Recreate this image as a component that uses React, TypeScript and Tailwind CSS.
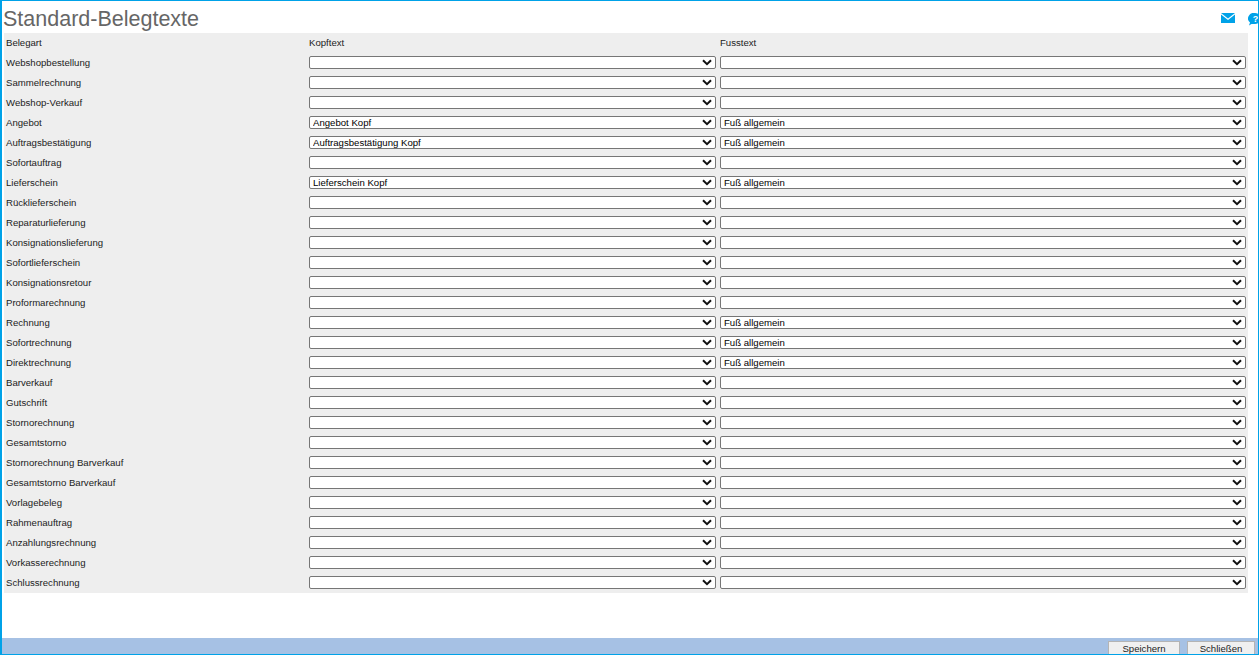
const rows: [string, string, string][] = [
  ["Webshopbestellung", "", ""],
  ["Sammelrechnung", "", ""],
  ["Webshop-Verkauf", "", ""],
  ["Angebot", "Angebot Kopf", "Fuß allgemein"],
  ["Auftragsbestätigung", "Auftragsbestätigung Kopf", "Fuß allgemein"],
  ["Sofortauftrag", "", ""],
  ["Lieferschein", "Lieferschein Kopf", "Fuß allgemein"],
  ["Rücklieferschein", "", ""],
  ["Reparaturlieferung", "", ""],
  ["Konsignationslieferung", "", ""],
  ["Sofortlieferschein", "", ""],
  ["Konsignationsretour", "", ""],
  ["Proformarechnung", "", ""],
  ["Rechnung", "", "Fuß allgemein"],
  ["Sofortrechnung", "", "Fuß allgemein"],
  ["Direktrechnung", "", "Fuß allgemein"],
  ["Barverkauf", "", ""],
  ["Gutschrift", "", ""],
  ["Stornorechnung", "", ""],
  ["Gesamtstorno", "", ""],
  ["Stornorechnung Barverkauf", "", ""],
  ["Gesamtstorno Barverkauf", "", ""],
  ["Vorlagebeleg", "", ""],
  ["Rahmenauftrag", "", ""],
  ["Anzahlungsrechnung", "", ""],
  ["Vorkasserechnung", "", ""],
  ["Schlussrechnung", "", ""],
];

const Select = ({ value }: { value: string }) => (
  <div className="relative mt-[3px] h-[13px] self-start">
    <select
      defaultValue={value}
      className="block h-[13px] w-full appearance-none rounded-[2px] border border-[#767676] bg-white pl-[3px] text-[9.6px] leading-[11px] text-black"
    >
      <option value=""></option>
      {value && <option value={value}>{value}</option>}
    </select>
    <svg width="10" height="7" viewBox="0 0 10 7" className="pointer-events-none absolute top-[3px] right-[4px]">
      <path d="M1 1.2 5 5.2 9 1.2" fill="none" stroke="#111111" strokeWidth="2" />
    </svg>
  </div>
);

const App = () => {
  return (
    <div className="flex h-[655px] w-[1259px] flex-col overflow-hidden border-t border-r border-b border-l-2 border-[#00a2e8] bg-white font-['Liberation_Sans',Arial,sans-serif]">
      <div className="flex h-[32px] shrink-0 items-start justify-between pl-[1px]">
        <h1 className="text-[21.5px] leading-[36px] text-[#666666]">Standard-Belegtexte</h1>
        <div className="mt-[12px] flex w-[37px] shrink-0 gap-[13px] overflow-hidden">
          <svg width="14" height="10" viewBox="0 0 14 10" className="shrink-0">
            <path d="M0 0h14L7 5.5z" fill="#00a2e8" />
            <path d="M0 1.5V10h14V1.5L7 7z" fill="#00a2e8" />
          </svg>
          <svg width="14" height="13" viewBox="0 0 14 13" className="shrink-0">
            <path d="M7 0a6 5.5 0 0 1 0 11H3.5L1 12.5l1-3A5.8 5.5 0 0 1 7 0z" fill="#00a2e8" />
            <text x="7.5" y="9" textAnchor="middle" fontSize="9" fontWeight="700" fill="#fff">?</text>
          </svg>
        </div>
      </div>
      <div className="ml-[2px] w-[1244px] shrink-0 bg-[#eeeeee] text-[9.6px] text-[#222222]">
        <div className="grid h-[20px] grid-cols-[303px_411px_1fr] items-center pl-[2px]">
          <span>Belegart</span>
          <span>Kopftext</span>
          <span>Fusstext</span>
        </div>
        {rows.map(([name, head, foot]) => (
          <div key={name} className="grid h-[20px] grid-cols-[299px_407px_526px] items-center gap-x-[4px] pl-[2px]">
            <span>{name}</span>
            <Select value={head} />
            <Select value={foot} />
          </div>
        ))}
      </div>
      <div className="mt-auto flex h-[16px] shrink-0 items-start justify-end gap-[7px] overflow-hidden bg-[#a6c1e4] pt-[3px] pr-[3px]">
        <button className="h-[13px] w-[72px] border border-b-0 border-[#b4b4b4] bg-[#f0f0f0] pt-[2px] text-[9.6px] leading-[10px] text-[#222222]">Speichern</button>
        <button className="h-[13px] w-[68px] border border-b-0 border-[#b4b4b4] bg-[#f0f0f0] pt-[2px] text-[9.6px] leading-[10px] text-[#222222]">Schließen</button>
      </div>
    </div>
  );
};

export default App;
